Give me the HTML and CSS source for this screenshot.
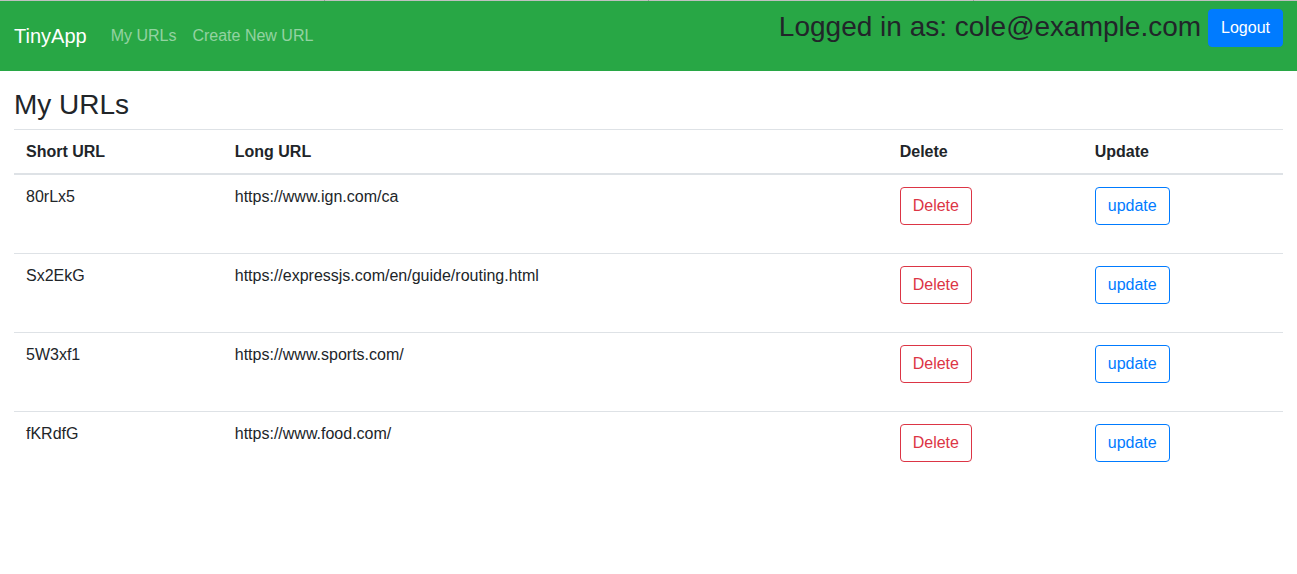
FILE: index.html
```html
<!DOCTYPE html>
<html lang="en">
<head>
  <meta charset="utf-8">
  <title>TinyApp</title>
  <link rel="stylesheet" href="styles.css">
</head>
<body>
  <header>
    <div class="tab-strip"><span></span><span></span><span></span><span></span></div>
    <nav class="navbar">
      <a class="brand" href="#">TinyApp</a>
      <a class="nav-link" href="#">My URLs</a>
      <a class="nav-link" href="#">Create New URL</a>
      <form class="session">
        <span class="session-user">Logged in as: cole@example.com</span>
        <button class="btn btn-primary" type="button">Logout</button>
      </form>
    </nav>
  </header>
  <main class="content">
    <h3 class="title">My URLs</h3>
    <table class="urls">
      <colgroup><col class="col-short"><col class="col-long"><col class="col-delete"><col></colgroup>
      <thead>
        <tr><th scope="col">Short URL</th><th scope="col">Long URL</th><th scope="col">Delete</th><th scope="col">Update</th></tr>
      </thead>
      <tbody>
        <tr>
          <td>80rLx5</td><td>https://www.ign.com/ca</td>
          <td><form class="action"><button class="btn btn-danger" type="button">Delete</button></form></td>
          <td><form class="action"><button class="btn btn-update" type="button">update</button></form></td>
        </tr>
        <tr>
          <td>Sx2EkG</td><td>https://expressjs.com/en/guide/routing.html</td>
          <td><form class="action"><button class="btn btn-danger" type="button">Delete</button></form></td>
          <td><form class="action"><button class="btn btn-update" type="button">update</button></form></td>
        </tr>
        <tr>
          <td>5W3xf1</td><td>https://www.sports.com/</td>
          <td><form class="action"><button class="btn btn-danger" type="button">Delete</button></form></td>
          <td><form class="action"><button class="btn btn-update" type="button">update</button></form></td>
        </tr>
        <tr>
          <td>fKRdfG</td><td>https://www.food.com/</td>
          <td><form class="action"><button class="btn btn-danger" type="button">Delete</button></form></td>
          <td><form class="action"><button class="btn btn-update" type="button">update</button></form></td>
        </tr>
      </tbody>
    </table>
  </main>
</body>
</html>
```
FILE: styles.css
```css
* {
  box-sizing: border-box;
}

body {
  margin: 0;
  background: #fff;
  color: #212529;
  font: 16px/20px "Liberation Sans", Arial, sans-serif;
}

.tab-strip {
  display: flex;
  height: 1px;
  background: #c0c0c0;
}

.tab-strip span {
  flex: 1;
  border-right: 1px solid #999;
}

.tab-strip span:last-child {
  border-right: 0;
}

.navbar {
  display: flex;
  align-items: center;
  padding: 8px 14px;
  background: #28a745;
}

.brand,
.nav-link {
  text-decoration: none;
}

.brand {
  margin-right: 16px;
  color: #fff;
  font-size: 20px;
}

.nav-link {
  padding: 8px;
  color: rgba(255, 255, 255, 0.5);
}

.session {
  display: flex;
  align-items: flex-start;
  gap: 7px;
  margin: 0 0 16px auto;
}

.session-user,
.title {
  font-size: 28px;
  line-height: 36px;
}

.btn {
  padding: 6px 12px;
  border: 1px solid;
  border-radius: 4px;
  background: transparent;
  font: inherit;
  line-height: 24px;
  cursor: pointer;
}

.btn-primary {
  border-color: #007bff;
  background: #007bff;
  color: #fff;
}

.btn-danger {
  border-color: #dc3545;
  color: #dc3545;
}

.btn-update {
  border-color: #007bff;
  color: #007bff;
}

.content {
  padding: 16px 14px;
}

.title {
  margin: 0 0 6px;
  font-weight: 400;
}

.urls {
  width: 100%;
  table-layout: fixed;
  border-collapse: separate;
  border-spacing: 0;
}

.col-short {
  width: 16.45%;
}

.col-long {
  width: 52.4%;
}

.col-delete {
  width: 15.37%;
}

.urls th,
.urls td {
  padding: 12px;
  text-align: left;
  vertical-align: top;
}

.urls th {
  border-top: 1px solid #dee2e6;
  border-bottom: 2px solid #dee2e6;
  line-height: 19px;
}

.urls tr + tr td {
  border-top: 1px solid #dee2e6;
}

.action {
  display: flex;
  margin: 0 0 16px;
}
```
